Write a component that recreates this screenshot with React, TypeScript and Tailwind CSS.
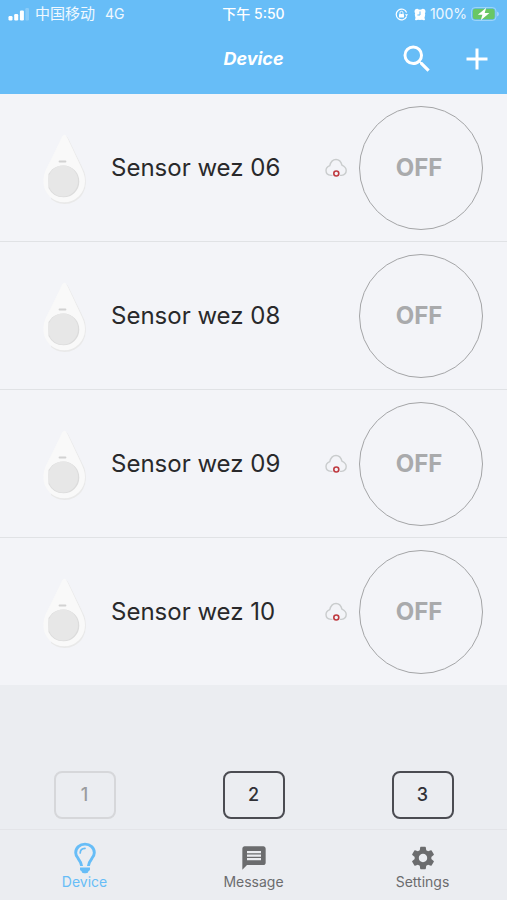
import React, { useState } from 'react';
import { MdAdd, MdMessage, MdSearch, MdSettings } from 'react-icons/md';

type Sensor = { id: string; name: string; offline: boolean; on: boolean };

const initialSensors: Sensor[] = [
  { id: '06', name: 'Sensor wez 06', offline: true, on: false },
  { id: '08', name: 'Sensor wez 08', offline: false, on: false },
  { id: '09', name: 'Sensor wez 09', offline: true, on: false },
  { id: '10', name: 'Sensor wez 10', offline: true, on: false },
];

const pages = [1, 2, 3];

function SignalIcon() {
  return (
    <svg viewBox="0 0 21 13" className="h-[13px] w-[21px]" fill="currentColor" aria-hidden="true">
      <rect x="0.5" y="8" width="4" height="4.5" rx="1.2" fill="#fff" />
      <rect x="6.2" y="6" width="4" height="6.5" rx="1.2" fill="#fff" />
      <rect x="11.9" y="2.5" width="4" height="10" rx="1.2" fill="#fff" />
      <rect x="17.4" y="0" width="3.6" height="12.5" rx="1.2" opacity="0.25" />
    </svg>
  );
}

function RotationLockIcon() {
  return (
    <svg viewBox="0 0 13 13" className="size-[13px]" fill="none" stroke="currentColor" aria-hidden="true">
      <path d="M11.6 4.4A5.4 5.4 0 1 0 11.6 8.6" strokeWidth="1.2" />
      <path d="M10 6.2h3l-1.5 2.2z" fill="currentColor" stroke="none" />
      <rect x="4" y="6" width="5" height="3.6" rx="0.6" fill="currentColor" stroke="none" />
      <path d="M5 6V4.8a1.5 1.5 0 0 1 3 0V6" strokeWidth="0.9" />
    </svg>
  );
}

function AlarmIcon() {
  return (
    <svg viewBox="0 0 12 13" className="h-[13px] w-3" fill="currentColor" aria-hidden="true">
      <circle cx="6" cy="6.8" r="5.2" />
      <path d="M0.600 4.600Q0 1 3.400 0.800L5 1.600L1.600 5.200zM11.400 4.600Q12 1 8.600 0.800L7 1.600L10.400 5.200z" />
      <path d="M1.800 9L1 11.600Q1.200 12.600 2.400 12.200L4.400 11.400zM10.200 9l.8 2.600Q10.800 12.600 9.600 12.200L7.600 11.400z" />
      <path d="M6 3.800V7H3.800" fill="none" stroke="#67bdf7" strokeWidth="1" strokeLinecap="round" />
    </svg>
  );
}

function BatteryIcon() {
  return (
    <svg viewBox="0 0 28 14" className="h-3.5 w-7" aria-hidden="true">
      <rect x="0.5" y="0.5" width="24.5" height="13" rx="3.6" fill="none" stroke="#fff" strokeOpacity="0.35" />
      <rect x="1.8" y="1.8" width="21.9" height="10.4" rx="2.2" fill="#69c765" />
      <path d="M26 4.6q2 .8 2 2.4t-2 2.4z" fill="#fff" fillOpacity="0.4" />
      <path d="M15.2 0.8L6.8 7.8h4.6L9.8 13.2l8.6-7.2h-4.7z" fill="#fff" />
    </svg>
  );
}

function SensorIcon() {
  return (
    <svg viewBox="0 0 46 72" className="h-[72px] w-[46px] shrink-0" aria-hidden="true">
      <path d="M24.500 4Q26 4 27.500 7L42 37C44 41 44.800 44 44.800 49.500A21.200 21.200 0 0 1 10 67Z" fill="#e9e9e9" />
      <path d="M22.500 3Q24.500 2 26.500 6L41 37C43 41.500 44 45 44 49.500A20.800 20.800 0 0 1 2.400 49.500C2.400 46 3 42 5 37.500L19.500 8Q21 4 22.500 3Z" fill="#f9f9f9" />
      <path d="M11 37.500Q16 33.500 22.500 33.500A15.800 15.800 0 0 1 38.300 49.500A15.800 15.800 0 0 1 22.500 65.300Q12 65.300 7.500 56V42Z" fill="#dcdcdc" />
      <ellipse cx="22" cy="49" rx="15" ry="15.500" fill="#e7e7e7" />
      <path d="M18.500 29.500h6" stroke="#d2d2d2" strokeWidth="1.800" strokeLinecap="round" />
    </svg>
  );
}

function CloudOfflineIcon() {
  return (
    <svg viewBox="0 0 22 20" className="h-5 w-[22px]" fill="none" role="img" aria-label="Offline">
      <path
        d="M7.500 17.400H6C3 17 1 15 1 12.400C1 10 2.700 8.600 4.800 7.700C5.600 4 7.800 1.500 11 1.500C14.200 1.500 16.200 4.200 17 7.200C19.400 8.400 21.200 10 21.200 12.500C21.200 15 19.200 17 16.500 17.400H15"
        stroke="#c9cccd"
        strokeWidth="1.400"
      />
      <circle cx="11.300" cy="15.500" r="2.500" stroke="#bf3b42" strokeWidth="1.600" />
    </svg>
  );
}

function BulbIcon() {
  return (
    <svg viewBox="0 0 24 32" className="h-8 w-6" fill="none" aria-hidden="true">
      <path
        d="M8.600 24C8.300 20.500 6.600 18.300 5 16.200C3.400 14.200 2.700 12.800 2.700 10.700C2.700 5.900 6.700 2.100 12 2.100S21.300 5.900 21.300 10.700C21.300 12.800 20.600 14.200 19 16.200C17.400 18.300 15.700 20.500 15.400 24"
        stroke="currentColor"
        strokeWidth="2.900"
      />
      <path d="M7.200 11C7.200 8.200 9.200 6.500 12 6.300" stroke="currentColor" strokeWidth="1.700" strokeLinecap="round" />
      <path d="M7 25.400h10v2.200q0 1-.9 1.200l-.5.100q-.3 2.300-2.600 2.300h-2q-2.300 0-2.600-2.300l-.5-.1q-.9-.2-.9-1.200z" fill="currentColor" />
    </svg>
  );
}

function SensorRow({ sensor, onToggle }: { sensor: Sensor; onToggle: () => void }) {
  return (
    <li className="box-content border-b border-[#e0e2e5] last:border-b-0">
      <div className="flex h-[147px] items-center pr-6 pl-[41px]">
        <SensorIcon />
        <span className="ml-6 flex-1 text-2xl text-[#29292b]">{sensor.name}</span>
        {sensor.offline && <CloudOfflineIcon />}
        <button
          type="button"
          aria-pressed={sensor.on}
          onClick={onToggle}
          className="ml-3 size-[124px] shrink-0 rounded-full border border-[#a4a5a7] pr-1 text-2xl font-bold text-[#a9aaac]"
        >
          {sensor.on ? 'ON' : 'OFF'}
        </button>
      </div>
    </li>
  );
}

export default function App() {
  const [sensors, setSensors] = useState(initialSensors);
  const [tab, setTab] = useState('Device');
  const [page, setPage] = useState(1);

  const toggle = (id: string) => {
    setSensors((prev) => prev.map((s) => (s.id === id ? { ...s, on: !s.on } : s)));
  };

  const tabs = [
    { label: 'Device', icon: <BulbIcon /> },
    { label: 'Message', icon: <MdMessage className="size-7" /> },
    { label: 'Settings', icon: <MdSettings className="size-7" /> },
  ];

  return (
    <div className="flex min-h-screen flex-col bg-[#ebedf1] font-[Inter,'Noto_Sans_CJK_SC',sans-serif]">
      <header className="bg-[#67bdf7] pb-1 text-white">
        <div className="grid h-7 grid-cols-3 items-center px-2 text-sm leading-5">
          <div className="flex items-center gap-1.5 whitespace-nowrap text-white/90">
            <SignalIcon />
            <span className="text-[15px]">中国移动</span>
            <span className="ml-1">4G</span>
          </div>
          <div className="text-center font-medium">下午 5:50</div>
          <div className="flex items-center justify-end gap-1">
            <RotationLockIcon />
            <span className="ml-0.5 flex"><AlarmIcon /></span>
            <span className="text-white/90">100%</span>
            <BatteryIcon />
          </div>
        </div>
        <div className="grid h-[62px] grid-cols-3 items-center pr-3">
          <h1 className="col-start-2 pl-3 text-center text-lg font-bold italic">Device</h1>
          <div className="flex items-center justify-end gap-6">
            <button type="button" aria-label="Search">
              <MdSearch className="size-9" />
            </button>
            <button type="button" aria-label="Add device">
              <MdAdd className="size-9" />
            </button>
          </div>
        </div>
      </header>

      <ul className="bg-[#f3f4f8]">
        {sensors.map((sensor) => (
          <SensorRow key={sensor.id} sensor={sensor} onToggle={() => toggle(sensor.id)} />
        ))}
      </ul>

      <div className="mt-auto grid grid-cols-3 justify-items-center pt-6 pb-[10px]">
        {pages.map((n) => (
          <button
            key={n}
            type="button"
            disabled={n === page}
            onClick={() => setPage(n)}
            className="h-12 w-[62px] rounded-lg border-2 border-[#4b4c52] text-lg font-medium text-[#303136] disabled:border-[#d6d7da] disabled:text-[#9b9c9f]"
          >
            {n}
          </button>
        ))}
      </div>

      <nav className="grid h-[71px] grid-cols-3 border-t border-[#e3e4e8]">
        {tabs.map(({ label, icon }) => (
          <button
            key={label}
            type="button"
            aria-current={tab === label ? 'page' : undefined}
            onClick={() => setTab(label)}
            className="flex flex-col items-center pt-3 text-sm leading-4 text-[#6b6c6e] aria-[current=page]:text-[#67bdf7]"
          >
            <span className="flex h-8 items-center">{icon}</span>
            {label}
          </button>
        ))}
      </nav>
    </div>
  );
}
